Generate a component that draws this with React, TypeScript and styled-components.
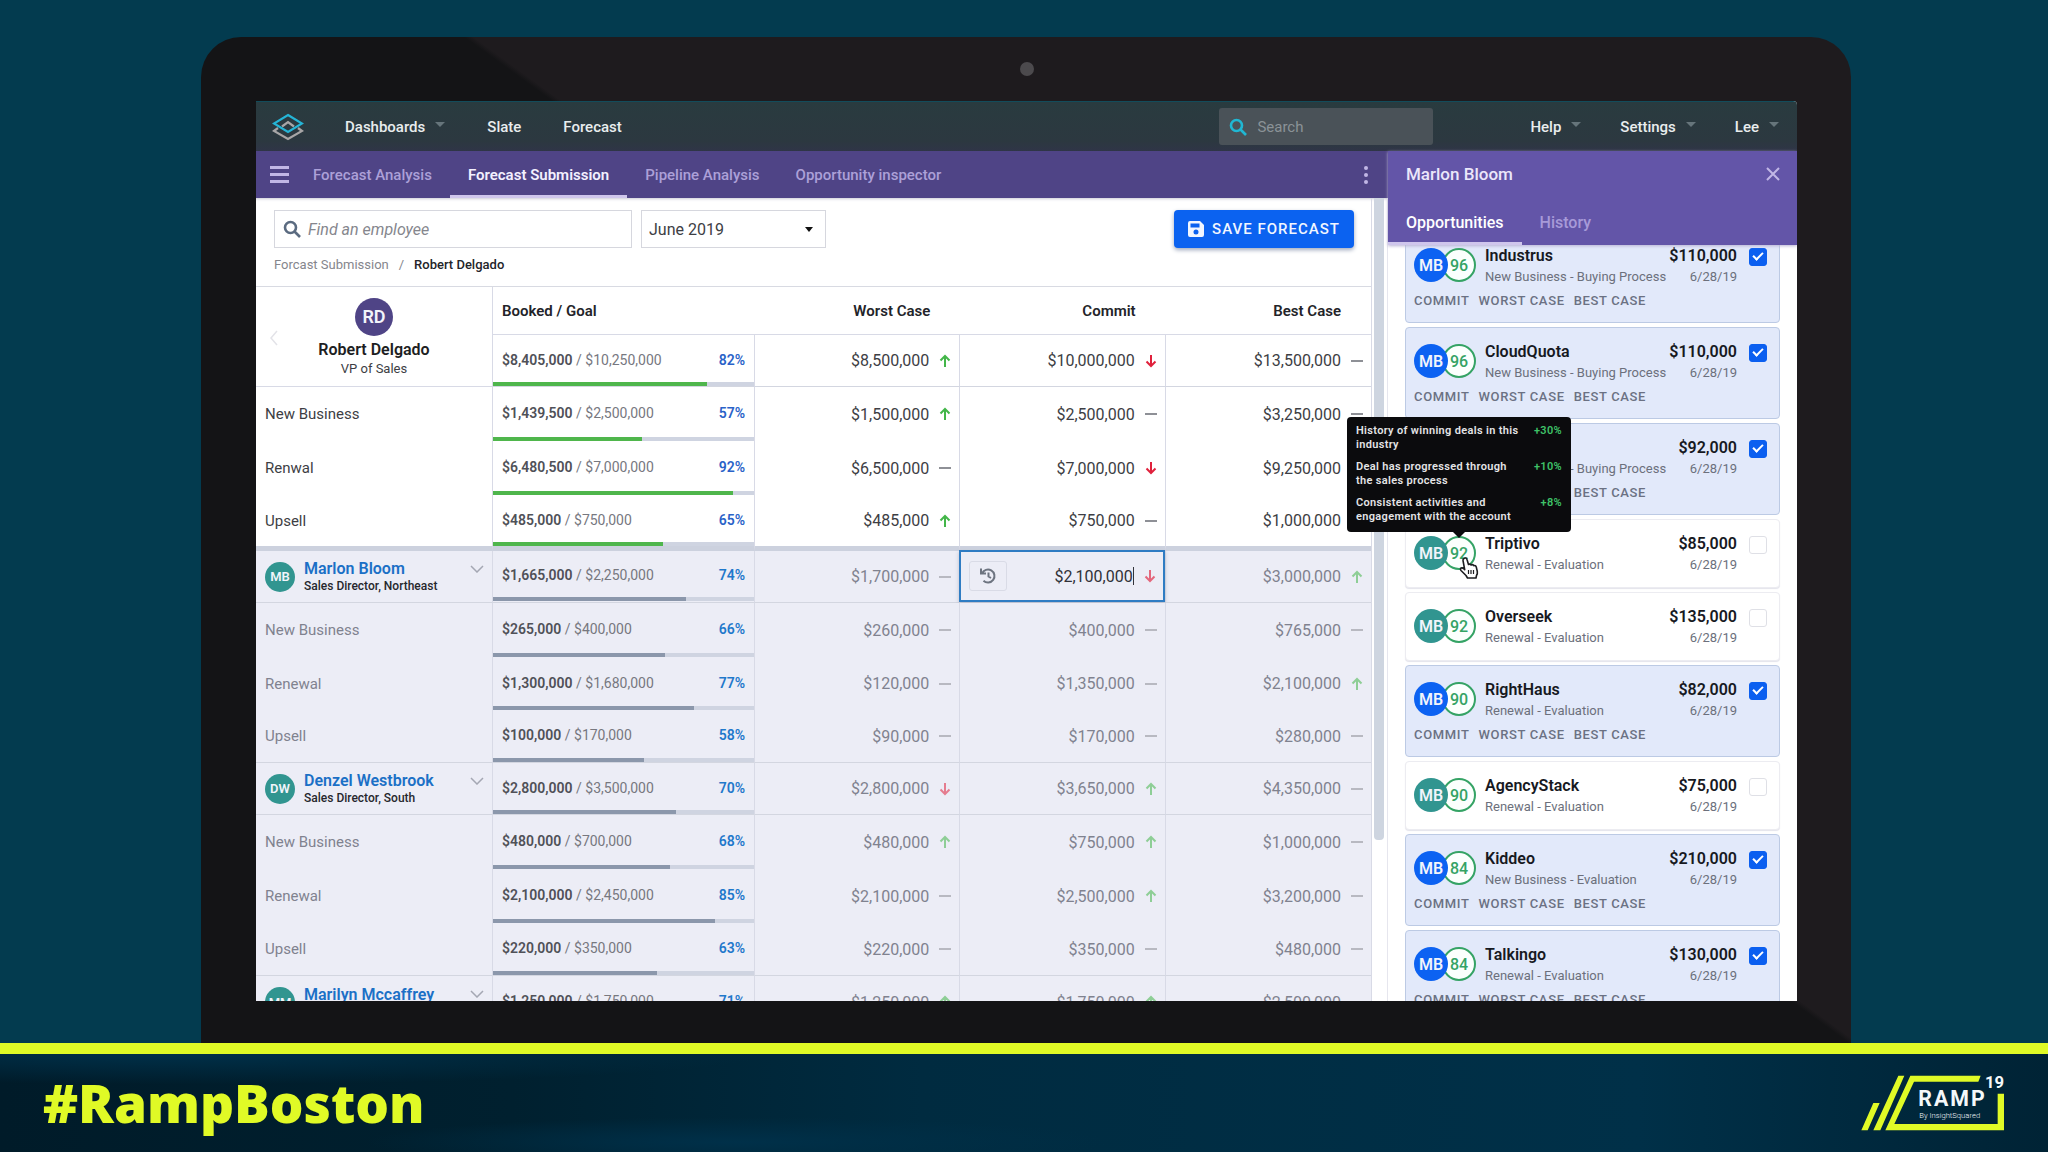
import React from "react";
import styled, { createGlobalStyle, css } from "styled-components";

type Trend = "up" | "down" | "flat";
type Amount = [string, Trend];

const GlobalStyle = createGlobalStyle`
  *, *::before, *::after { box-sizing: border-box; }
  html, body { margin: 0; height: 100%; }
  body { background: #033b4f; font-family: Roboto, "Noto Sans", sans-serif; font-size: 16px; color: #3d3e44; }
  button, input, select { font: inherit; color: inherit; margin: 0; }
  a { color: inherit; text-decoration: none; }
`;

const Page = styled.div`
  display: flex;
  flex-direction: column;
  height: 100vh;
  overflow: hidden;
`;

const Stage = styled.main`
  display: flex;
  flex: 1;
  min-height: 0;
  padding: 37px 197px 0 201px;
`;

const Monitor = styled.div`
  display: flex;
  flex-direction: column;
  align-items: stretch;
  flex: 1;
  min-width: 0;
  padding: 0 54px 42px 55px;
  border-radius: 40px 40px 0 0;
  background: linear-gradient(36deg, #141416 54.3%, #1e1b1e 54.6%);
`;

const CameraBar = styled.div`
  display: flex;
  justify-content: center;
  align-items: center;
  height: 64px;
`;

const Camera = styled.span`
  width: 14px;
  height: 14px;
  border-radius: 50%;
  background: #4c4a4d;
`;

const Screen = styled.div`
  display: flex;
  flex-direction: column;
  flex: 1;
  min-height: 0;
  overflow: hidden;
  background: #fff;
  border-radius: 0 4px 0 0;
`;

const TopNav = styled.header`
  display: flex;
  align-items: center;
  flex: none;
  height: 50px;
  padding: 0 18px 0 16px;
  border-top: 1px solid #124c5b;
  background: linear-gradient(#293b3f, #2c3840 80%, #2f3547);
  font-size: 15px;
  font-weight: 500;
  color: #e9edee;
`;

const NavLinks = styled.nav<{ $end?: boolean }>`
  display: flex;
  gap: ${(p) => (p.$end ? 39 : 42)}px;
  margin-left: ${(p) => (p.$end ? 97 : 41)}px;
`;

const NavLink = styled.a<{ $caret?: boolean }>`
  display: flex;
  align-items: center;
  gap: 10px;
  ${(p) =>
    p.$caret &&
    css`
      &::after {
        content: "";
        margin-bottom: 5px;
        border: 5px solid transparent;
        border-top-color: #66757b;
        border-bottom: 0;
      }
    `}
`;

const NavSearch = styled.label`
  display: flex;
  align-items: center;
  gap: 10px;
  width: 214px;
  height: 37px;
  margin-left: auto;
  padding: 0 10px;
  border-radius: 3px;
  background: #4a5258;
  color: #20b7d3;

  input {
    flex: 1;
    min-width: 0;
    border: 0;
    padding: 0;
    background: none;
    outline: none;
  }
  input::placeholder { color: #8b9297; font-weight: 400; }
`;

const Workspace = styled.div`
  display: flex;
  flex: 1;
  min-height: 0;
`;

const MainPane = styled.section`
  display: flex;
  flex-direction: column;
  flex: 1;
  min-width: 0;
`;

const TabBar = styled.nav`
  display: flex;
  align-items: stretch;
  flex: none;
  height: 47px;
  padding: 0 10px 0 8px;
  background: #4f4486;
`;

const IconButton = styled.button`
  display: flex;
  align-items: center;
  justify-content: center;
  padding: 0;
  border: 0;
  background: none;
  color: #c1b7e6;
`;

const BarButton = styled(IconButton)`
  width: 31px;
`;

const KebabButton = styled(IconButton)`
  width: 24px;
  margin-left: auto;
`;

const Tab = styled.a<{ $active?: boolean }>`
  display: flex;
  align-items: center;
  padding: 0 18px;
  font-size: 15px;
  font-weight: ${(p) => (p.$active ? 600 : 500)};
  color: ${(p) => (p.$active ? "#f3f0ff" : "#aca0d8")};
  box-shadow: ${(p) => (p.$active ? "inset 0 -3px #cfc6ec" : "none")};
`;

const Scroller = styled.div`
  display: flex;
  flex: 1;
  min-height: 0;
  box-shadow: inset 0 3px 3px -2px #cbcbd6;
`;

const Sheet = styled.div`
  flex: 1;
  min-width: 0;
  overflow: hidden;
  border-right: 1px solid #d8dae6;
`;

const ScrollTrack = styled.div`
  width: 16px;
  padding: 0 3px 0 2px;
  border-right: 1px solid #e6e6ee;
`;

const ScrollThumb = styled.div`
  height: 80%;
  border-radius: 0 0 4px 4px;
  background: #ced5e0;
`;

const Toolbar = styled.div`
  display: flex;
  gap: 9px;
  padding: 12px 17px 0 18px;
`;

const EmployeeSearch = styled.label`
  display: flex;
  align-items: center;
  gap: 7px;
  width: 358px;
  height: 38px;
  padding: 0 8px;
  border: 1px solid #d6d7de;
  color: #5b6b80;

  input {
    flex: 1;
    min-width: 0;
    border: 0;
    padding: 0;
    outline: none;
  }
  input::placeholder { color: #85868d; font-style: italic; }
`;

const MonthField = styled.div`
  display: grid;
  align-items: center;
  width: 185px;
  height: 38px;
  border: 1px solid #d6d7de;

  > * { grid-area: 1 / 1; }

  select {
    appearance: none;
    width: 100%;
    height: 100%;
    padding: 0 7px;
    border: 0;
    background: none;
  }

  &::after {
    content: "";
    grid-area: 1 / 1;
    justify-self: end;
    margin-right: 12px;
    border: 4px solid transparent;
    border-top: 5px solid #111;
    border-bottom: 0;
    pointer-events: none;
  }
`;

const SaveButton = styled.button`
  display: flex;
  align-items: center;
  justify-content: center;
  gap: 8px;
  width: 180px;
  height: 38px;
  margin-left: auto;
  padding: 0;
  border: 0;
  border-radius: 4px;
  background: #0b62f0;
  box-shadow: 0 2px 4px #9fa8bd;
  font-size: 15px;
  font-weight: 500;
  letter-spacing: 1px;
  color: #f1f6ff;
`;

const Breadcrumb = styled.nav`
  display: flex;
  gap: 10px;
  padding: 8px 18px 12px;
  font-size: 13px;
  line-height: 18px;
  color: #85868d;

  b { font-weight: 500; color: #232429; }
`;

const Grid = styled.table`
  width: 100%;
  table-layout: fixed;
  border-collapse: separate;
  border-spacing: 0;
  border-top: 1px solid #d8dae2;

  th, td { padding: 0; text-align: left; font-weight: 400; }
`;

const GroupHead = styled.th`
  border-right: 1px solid #d8dae6;
  border-bottom: 1px solid #d8dae6;
`;

const HeadPerson = styled.div`
  display: grid;
  grid-template-columns: 34px 1fr 34px;
  justify-items: center;
  align-items: center;
  height: 99px;
  padding-top: 2px;
`;

const HeadPersonText = styled.div`
  display: flex;
  flex-direction: column;
  align-items: center;
  font-size: 13px;
  line-height: 18px;
  color: #3d3e44;

  strong { margin-top: 4px; font-size: 16px; line-height: 20px; font-weight: 600; color: #1d1e22; }
`;

const Disc = styled.span<{ $size: number; $color: string; $font?: number }>`
  display: flex;
  align-items: center;
  justify-content: center;
  flex: none;
  width: ${(p) => p.$size}px;
  height: ${(p) => p.$size}px;
  border-radius: 50%;
  background: ${(p) => p.$color};
  font-size: ${(p) => p.$font ?? 16}px;
  font-weight: 600;
  color: #f2f4fb;
`;

const ColumnHead = styled.th<{ $start?: boolean }>`
  && {
    height: 48px;
    padding: ${(p) => (p.$start ? "0 0 0 9px" : "0 30px 0 0")};
    border-bottom: 1px solid #d8dae6;
    text-align: ${(p) => (p.$start ? "left" : "right")};
    font-size: 15px;
    font-weight: 600;
    color: #232429;
  }
`;

const Row = styled.tr<{ $height: number; $muted?: boolean; $line?: boolean; $thick?: boolean }>`
  height: ${(p) => p.$height}px;
  background: ${(p) => (p.$muted ? "#ecedf6" : "#fff")};
  color: ${(p) => (p.$muted ? "#80828f" : "#3d3e44")};

  > * {
    height: ${(p) => p.$height}px;
    border-right: 1px solid #d8dae6;
    border-bottom: ${(p) => (p.$thick ? "5px solid #ccd1de" : p.$line ? "1px solid #d3d6e0" : "0")};
  }
  > *:last-child { border-right: 0; }
`;

const RowLabel = styled.th`
  && { padding-left: 9px; font-size: 15px; }
`;

const Person = styled.div`
  display: flex;
  gap: 9px;
  padding: 0 8px 0 0;
  align-items: center;
`;

const PersonText = styled.div`
  display: flex;
  flex-direction: column;
  flex: 1;
  min-width: 0;
  font-size: 12px;
  line-height: 16px;
  font-weight: 500;
  color: #26272d;

  a { font-size: 16px; line-height: 19px; font-weight: 600; color: #1b70c6; }
`;

const BookedCell = styled.td`
  vertical-align: top;
`;

const Booked = styled.div<{ $height: number }>`
  display: flex;
  flex-direction: column;
  height: ${(p) => p.$height}px;
`;

const BookedText = styled.div<{ $muted?: boolean }>`
  display: flex;
  align-items: center;
  justify-content: space-between;
  flex: 1;
  padding: 2px 9px 0;
  font-size: 14px;
  color: #77787f;

  b { font-weight: 600; color: #505158; }
  em { font-style: normal; font-weight: 600; color: ${(p) => (p.$muted ? "#1f78cb" : "#2a62c8")}; }
`;

const Meter = styled.div<{ $muted?: boolean }>`
  height: 4px;
  background: #cfd4e1;

  > div { height: 100%; background: ${(p) => (p.$muted ? "#8b97ab" : "#4fb64c")}; }
`;

const AmountCell = styled.td`
  && { padding: 0 6px 0 0; }
`;

const AmountLine = styled.div<{ $muted?: boolean }>`
  display: flex;
  align-items: center;
  justify-content: flex-end;
  gap: 8px;

  svg { opacity: ${(p) => (p.$muted ? 0.55 : 1)}; }
`;

const Editor = styled.div`
  display: flex;
  align-items: center;
  gap: 8px;
  height: 52px;
  margin: -1px 0 0 -1px;
  padding: 0 5px 0 8px;
  border: 2px solid #2f7cc3;
  box-shadow: 0 2px 4px #b9bdcc;

  > svg { opacity: 0.65; }
`;

const EditingCell = styled.td`
  vertical-align: top;
`;

const HistoryButton = styled(IconButton)`
  width: 38px;
  height: 30px;
  border: 1px solid #d9dbe6;
  border-radius: 3px;
  color: #6d7480;
`;

const AmountInput = styled.input`
  flex: 1;
  min-width: 0;
  padding: 0 1px 0 0;
  border: 0;
  background: linear-gradient(#33343a, #33343a) right / 1px 18px no-repeat;
  outline: none;
  text-align: right;
  color: #303138;
`;

const Panel = styled.aside`
  display: flex;
  flex-direction: column;
  flex: none;
  width: 409px;
  z-index: 1;
`;

const PanelHeader = styled.header`
  flex: none;
  height: 94px;
  background: #6355a8;
  z-index: 1;
  box-shadow: 0 1px 3px #b9b3d4;
`;

const PanelTitle = styled.div`
  display: flex;
  justify-content: space-between;
  align-items: center;
  height: 46px;
  padding: 0 17px 0 18px;

  h2 { margin: 0; font-size: 17px; font-weight: 500; color: #ebe7fa; }
`;

const PanelTabs = styled.nav`
  display: flex;
  height: 48px;
`;

const PanelTab = styled(Tab)`
  padding: 2px 18px 0;
  font-size: 16px;
  font-weight: 500;
  color: ${(p) => (p.$active ? "#fff" : "#a79ad8")};
`;

const CardList = styled.ul`
  display: flex;
  flex-direction: column;
  gap: 4px;
  margin: -14px 0 0;
  padding: 0 17px;
  list-style: none;
`;

const Card = styled.li<{ $on: boolean }>`
  flex: none;
  height: ${(p) => (p.$on ? 92 : 69)}px;
  padding: 14px 12px 0 8px;
  border: 1px solid ${(p) => (p.$on ? "#bccae4" : "#ececf1")};
  border-radius: 4px;
  background: ${(p) => (p.$on ? "#e2e9fa" : "#fff")};
  box-shadow: ${(p) => (p.$on ? "none" : "0 1px 1px #e4e4ec")};
`;

const CardTop = styled.div`
  display: flex;
  align-items: flex-start;
`;

const Score = styled.span<{ $raised?: boolean }>`
  position: relative;
  z-index: ${(p) => (p.$raised ? "auto" : 0)};
  display: flex;
  align-items: center;
  justify-content: center;
  flex: none;
  width: 34px;
  height: 34px;
  margin: 2px 9px 0 -6px;
  border: 2px solid #35a365;
  border-radius: 50%;
  background: #fbfffd;
  font-weight: 500;
  color: #35a365;
`;

const OwnerDisc = styled(Disc)`
  position: relative;
  z-index: 1;
  margin-top: 2px;
`;

const Column = styled.div<{ $end?: boolean }>`
  display: flex;
  flex-direction: column;
  flex: ${(p) => (p.$end ? "none" : 1)};
  min-width: 0;
  align-items: ${(p) => (p.$end ? "flex-end" : "flex-start")};
  font-size: 13px;
  line-height: 23px;
  white-space: nowrap;
  color: #6c707c;

  strong { font-size: 16px; line-height: 19px; font-weight: 600; color: #17191f; }
`;

const Check = styled.input`
  appearance: none;
  flex: none;
  width: 18px;
  height: 18px;
  margin: 2px 0 0 12px;
  border: 1px solid #dfe0e6;
  border-radius: 3px;
  background: #fff;

  &:checked {
    border-color: #0b5ff0;
    background: #0b5ff0;
  }
  &:checked::after {
    content: "";
    display: block;
    width: 6px;
    height: 10px;
    margin: 1px 0 0 5px;
    border: solid #fff;
    border-width: 0 2px 2px 0;
    transform: rotate(45deg);
  }
`;

const Tags = styled.div`
  display: flex;
  gap: 9px;
  margin-top: 4px;
  font-size: 13px;
  line-height: 18px;
  font-weight: 500;
  letter-spacing: 0.05em;
  color: #6b7183;
`;

const Tooltip = styled.div`
  position: absolute;
  z-index: 3;
  bottom: 36px;
  left: 50%;
  width: 224px;
  margin-left: -112px;
  padding: 7px 9px 8px;
  border-radius: 4px;
  background: #0b0b0d;
  font-size: 11px;
  line-height: 14px;
  font-weight: 600;
  letter-spacing: 0.03em;
  color: #e4e4e6;

  &::after {
    content: "";
    position: absolute;
    top: 100%;
    left: 50%;
    margin-left: -6px;
    border: 6px solid transparent;
    border-top-color: #0b0b0d;
    border-bottom: 0;
  }
`;

const Factor = styled.div`
  display: flex;
  justify-content: space-between;
  & + & { margin-top: 8px; }

  p { width: 170px; margin: 0; }
  b { font-weight: 600; color: #3fc268; }
`;

const Pointer = styled.svg`
  position: absolute;
  z-index: 4;
  left: 14px;
  top: 18px;
`;

const Footer = styled.footer`
  display: flex;
  justify-content: space-between;
  align-items: center;
  flex: none;
  height: 109px;
  padding: 0 43px;
  border-top: 11px solid #e0fa26;
  background:
    radial-gradient(ellipse at 9% 0%, #003049, transparent 22%),
    radial-gradient(ellipse at 36% 90%, #003049, transparent 20%),
    linear-gradient(90deg, #001b29, #00202f 25%, #002b40 45%, #003048 80%, #002335);
`;

const Hashtag = styled.strong`
  font-family: "Noto Sans", sans-serif;
  font-size: 53px;
  line-height: 60px;
  font-weight: 900;
  color: #e0fa26;
`;

const trendPath: Record<Trend, { d: string; color: string }> = {
  up: { d: "M7 13V2M2.500 6.500L7 2l4.500 4.500", color: "#43b649" },
  down: { d: "M7 1v11M2.500 7.500L7 12l4.500-4.500", color: "#e0213c" },
  flat: { d: "M1 7h12", color: "#8e9096" },
};

const TrendMark = ({ kind }: { kind: Trend }) => (
  <svg width="16" height="14" viewBox="-1 0 16 14" fill="none" stroke={trendPath[kind].color} strokeWidth="2">
    <path d={trendPath[kind].d} />
  </svg>
);

const Magnifier = () => (
  <svg width="18" height="18" viewBox="0 0 18 18" fill="none" stroke="currentColor" strokeWidth="2.600">
    <circle cx="7.500" cy="7.500" r="5.500" />
    <path d="M11.500 11.500L17 17" />
  </svg>
);

const Chevron = () => (
  <svg width="14" height="8" viewBox="0 0 14 8" fill="none" stroke="#a4a7b3" strokeWidth="1.500">
    <path d="M1 1l6 6 6-6" />
  </svg>
);

const ChevronSlot = styled.span`
  display: flex;
  margin-bottom: 16px;
`;

const LayersLogo = () => (
  <svg width="32" height="28" viewBox="0 0 32 28" fill="none" strokeWidth="2.200">
    <path d="M6 15L2 18l14 8 14-8-4-3" stroke="#a7a5a6" />
    <path d="M10 13.500l6-4.500 6 4.500" stroke="#a7a5a6" />
    <path d="M16 2l14 8.500L16 19 2 10.500z" stroke="#25b4d6" />
  </svg>
);

type Line = {
  label: string;
  booked: string;
  goal: string;
  pct: number;
  amounts: [Amount, Amount, Amount];
  person?: { initials: string; role: string };
  editing?: boolean;
  height: number;
  line?: boolean;
  thick?: boolean;
};

const team: Line[] = [
  { label: "New Business", booked: "$1,439,500", goal: "$2,500,000", pct: 57, height: 54, amounts: [["$1,500,000", "up"], ["$2,500,000", "flat"], ["$3,250,000", "flat"]] },
  { label: "Renwal", booked: "$6,480,500", goal: "$7,000,000", pct: 92, height: 54, amounts: [["$6,500,000", "flat"], ["$7,000,000", "down"], ["$9,250,000", "up"]] },
  { label: "Upsell", booked: "$485,000", goal: "$750,000", pct: 65, height: 56, thick: true, amounts: [["$485,000", "up"], ["$750,000", "flat"], ["$1,000,000", "flat"]] },
];

const reports: Line[] = [
  { label: "Marlon Bloom", person: { initials: "MB", role: "Sales Director, Northeast" }, editing: true, line: true, booked: "$1,665,000", goal: "$2,250,000", pct: 74, height: 51, amounts: [["$1,700,000", "flat"], ["$2,100,000", "down"], ["$3,000,000", "up"]] },
  { label: "New Business", booked: "$265,000", goal: "$400,000", pct: 66, height: 54, amounts: [["$260,000", "flat"], ["$400,000", "flat"], ["$765,000", "flat"]] },
  { label: "Renewal", booked: "$1,300,000", goal: "$1,680,000", pct: 77, height: 53, amounts: [["$120,000", "flat"], ["$1,350,000", "flat"], ["$2,100,000", "up"]] },
  { label: "Upsell", booked: "$100,000", goal: "$170,000", pct: 58, height: 53, line: true, amounts: [["$90,000", "flat"], ["$170,000", "flat"], ["$280,000", "flat"]] },
  { label: "Denzel Westbrook", person: { initials: "DW", role: "Sales Director, South" }, line: true, booked: "$2,800,000", goal: "$3,500,000", pct: 70, height: 52, amounts: [["$2,800,000", "down"], ["$3,650,000", "up"], ["$4,350,000", "flat"]] },
  { label: "New Business", booked: "$480,000", goal: "$700,000", pct: 68, height: 54, amounts: [["$480,000", "up"], ["$750,000", "up"], ["$1,000,000", "flat"]] },
  { label: "Renewal", booked: "$2,100,000", goal: "$2,450,000", pct: 85, height: 54, amounts: [["$2,100,000", "flat"], ["$2,500,000", "up"], ["$3,200,000", "flat"]] },
  { label: "Upsell", booked: "$220,000", goal: "$350,000", pct: 63, height: 53, line: true, amounts: [["$220,000", "flat"], ["$350,000", "flat"], ["$480,000", "flat"]] },
  { label: "Marilyn Mccaffrey", person: { initials: "MM", role: "Sales Director, West" }, line: true, booked: "$1,250,000", goal: "$1,750,000", pct: 71, height: 53, amounts: [["$1,250,000", "up"], ["$1,750,000", "up"], ["$2,500,000", "flat"]] },
];

const BookedBlock = ({ row, muted }: { row: Pick<Line, "booked" | "goal" | "pct" | "height" | "line" | "thick">; muted?: boolean }) => (
  <BookedCell>
    <Booked $height={row.height - (row.thick ? 5 : row.line ? 1 : 0)}>
      <BookedText $muted={muted}>
        <span>
          <b>{row.booked}</b> / {row.goal}
        </span>
        <em>{row.pct}%</em>
      </BookedText>
      <Meter $muted={muted}>
        <div style={{ width: `${row.pct}%` }} />
      </Meter>
    </Booked>
  </BookedCell>
);

const Amounts = ({ row, muted }: { row: Pick<Line, "amounts" | "editing">; muted?: boolean }) => (
  <>
    {row.amounts.map(([value, kind], i) =>
      row.editing && i === 1 ? (
        <EditingCell key={i}>
          <Editor>
            <HistoryButton aria-label="Commit history">
              <svg width="18" height="18" viewBox="0 0 18 18" fill="none" stroke="currentColor" strokeWidth="2">
                <path d="M3 6.500A6.500 6.500 0 1 1 4.500 13.800M2 1.500v5h5M9.500 5.500v4l2.500 1.500" />
              </svg>
            </HistoryButton>
            <AmountInput aria-label="Commit amount" defaultValue={value} />
            <TrendMark kind={kind} />
          </Editor>
        </EditingCell>
      ) : (
        <AmountCell key={i}>
          <AmountLine $muted={muted}>
            {value}
            <TrendMark kind={kind} />
          </AmountLine>
        </AmountCell>
      )
    )}
  </>
);

const LineRow = ({ row, muted }: { row: Line; muted?: boolean }) => (
  <Row $height={row.height} $muted={muted} $line={row.line} $thick={row.thick}>
    <RowLabel scope="row">
      {row.person ? (
        <Person>
          <Disc $size={30} $color="#319590" $font={13}>
            {row.person.initials}
          </Disc>
          <PersonText>
            <a href="#person">{row.label}</a>
            <span>{row.person.role}</span>
          </PersonText>
          <ChevronSlot>
            <Chevron />
          </ChevronSlot>
        </Person>
      ) : (
        row.label
      )}
    </RowLabel>
    <BookedBlock row={row} muted={muted} />
    <Amounts row={row} muted={muted} />
  </Row>
);

type Deal = { name: string; score: number; kind: string; amount: string; on: boolean; hovered?: boolean };

const deals: Deal[] = [
  { name: "Industrus", score: 96, kind: "New Business - Buying Process", amount: "$110,000", on: true },
  { name: "CloudQuota", score: 96, kind: "New Business - Buying Process", amount: "$110,000", on: true },
  { name: "Skyline", score: 94, kind: "New Business - Buying Process", amount: "$92,000", on: true },
  { name: "Triptivo", score: 92, kind: "Renewal - Evaluation", amount: "$85,000", on: false, hovered: true },
  { name: "Overseek", score: 92, kind: "Renewal - Evaluation", amount: "$135,000", on: false },
  { name: "RightHaus", score: 90, kind: "Renewal - Evaluation", amount: "$82,000", on: true },
  { name: "AgencyStack", score: 90, kind: "Renewal - Evaluation", amount: "$75,000", on: false },
  { name: "Kiddeo", score: 84, kind: "New Business - Evaluation", amount: "$210,000", on: true },
  { name: "Talkingo", score: 84, kind: "Renewal - Evaluation", amount: "$130,000", on: true },
];

const ScoreTooltip = () => (
  <Tooltip role="tooltip">
    <Factor>
      <p>History of winning deals in this industry</p>
      <b>+30%</b>
    </Factor>
    <Factor>
      <p>Deal has progressed through the sales process</p>
      <b>+10%</b>
    </Factor>
    <Factor>
      <p>Consistent activities and engagement with the account</p>
      <b>+8%</b>
    </Factor>
  </Tooltip>
);

const HandPointer = () => (
  <Pointer width="22" height="24" viewBox="0 0 22 24" fill="#fff" stroke="#1d1d20" strokeWidth="1.600" strokeLinejoin="round">
    <path d="M6 2.500c1-1 2.600-.5 3 1l1.500 5c1-.7 2-.4 2.600.5 1-.6 2-.3 2.600.7 1.200-.5 2.300 0 2.600 1.400l1 4.400c.3 1.500 0 2.700-.8 4l-.5 2.500H9.500L8 19.500l-5-5c-.8-1-.6-2 .2-2.500.9-.4 1.800 0 2.500.7l1 1L5 4.500c-.2-.8.2-1.500 1-2z" />
    <path d="M10.500 14v4M13 14v4M15.500 14v4" strokeWidth="1.200" />
  </Pointer>
);

const DealCard = ({ deal }: { deal: Deal }) => (
  <Card $on={deal.on}>
    <CardTop>
      <OwnerDisc $size={34} $color={deal.on ? "#0c62f2" : "#319590"}>
        MB
      </OwnerDisc>
      <Score $raised={deal.hovered}>
        {deal.score}
        {deal.hovered && <ScoreTooltip />}
        {deal.hovered && <HandPointer />}
      </Score>
      <Column>
        <strong>{deal.name}</strong>
        <span>{deal.kind}</span>
      </Column>
      <Column $end>
        <strong>{deal.amount}</strong>
        <span>6/28/19</span>
      </Column>
      <Check type="checkbox" defaultChecked={deal.on} aria-label={`Include ${deal.name}`} />
    </CardTop>
    {deal.on && (
      <Tags>
        <span>COMMIT</span>
        <span>WORST CASE</span>
        <span>BEST CASE</span>
      </Tags>
    )}
  </Card>
);

const RampLogo = () => (
  <svg width="144" height="56" viewBox="485 169 430 168" role="img" aria-label="Ramp 19 by InsightSquared">
    <path
      fill="#e0fa26"
      d="M485 335h19l36-82h-19zM521 335h21l72-164h-18zM557 335L632 171h211l-7 18H643L584 316h310v-91h19v110z"
    />
    <g fill="#f4f8fa" fontFamily="Roboto, sans-serif">
      <text x="656" y="262" fontSize="64" fontWeight="700" letterSpacing="6">
        RAMP
      </text>
      <text x="659" y="297" fontSize="23" fontWeight="300">
        By InsightSquared
      </text>
      <text x="856" y="208" fontSize="50" fontWeight="700">
        19
      </text>
    </g>
  </svg>
);

export default function App() {
  return (
    <Page>
      <GlobalStyle />
      <Stage>
        <Monitor>
          <CameraBar>
            <Camera />
          </CameraBar>
          <Screen>
            <TopNav>
              <LayersLogo />
              <NavLinks>
                <NavLink href="#dashboards" $caret>Dashboards</NavLink>
                <NavLink href="#slate">Slate</NavLink>
                <NavLink href="#forecast">Forecast</NavLink>
              </NavLinks>
              <NavSearch>
                <Magnifier />
                <input placeholder="Search" aria-label="Search" />
              </NavSearch>
              <NavLinks $end>
                <NavLink href="#help" $caret>Help</NavLink>
                <NavLink href="#settings" $caret>Settings</NavLink>
                <NavLink href="#account" $caret>Lee</NavLink>
              </NavLinks>
            </TopNav>
            <Workspace>
              <MainPane>
                <TabBar>
                  <BarButton aria-label="Menu">
                    <svg width="19" height="18" viewBox="0 0 19 18" fill="currentColor">
                      <path d="M0 0h19v3H0zM0 7h19v3H0zM0 14h19v3H0z" />
                    </svg>
                  </BarButton>
                  <Tab href="#analysis">Forecast Analysis</Tab>
                  <Tab href="#submission" $active>Forecast Submission</Tab>
                  <Tab href="#pipeline">Pipeline Analysis</Tab>
                  <Tab href="#inspector">Opportunity inspector</Tab>
                  <KebabButton aria-label="More">
                    <svg width="4" height="18" viewBox="0 0 4 18" fill="currentColor">
                      <circle cx="2" cy="2" r="2" />
                      <circle cx="2" cy="9" r="2" />
                      <circle cx="2" cy="16" r="2" />
                    </svg>
                  </KebabButton>
                </TabBar>
                <Scroller>
                  <Sheet>
                    <Toolbar>
                      <EmployeeSearch>
                        <Magnifier />
                        <input placeholder="Find an employee" aria-label="Find an employee" />
                      </EmployeeSearch>
                      <MonthField>
                        <select aria-label="Month" defaultValue="June 2019">
                          <option>June 2019</option>
                        </select>
                      </MonthField>
                      <SaveButton>
                        <svg width="16" height="16" viewBox="0 0 16 16" fill="currentColor" fillRule="evenodd">
                          <path d="M2 0h10l4 4v10a2 2 0 0 1-2 2H2a2 2 0 0 1-2-2V2a2 2 0 0 1 2-2zm.500 2.500v4h9v-4zM8 8.500a2.500 2.500 0 1 0 0 5 2.500 2.500 0 0 0 0-5z" />
                        </svg>
                        SAVE FORECAST
                      </SaveButton>
                    </Toolbar>
                    <Breadcrumb>
                      <a href="#submission">Forcast Submission</a>
                      <span>/</span>
                      <b>Robert Delgado</b>
                    </Breadcrumb>
                    <Grid>
                      <colgroup>
                        <col width="237" />
                        <col width="262" />
                        <col />
                        <col />
                        <col />
                      </colgroup>
                      <thead>
                        <tr>
                          <GroupHead rowSpan={2}>
                            <HeadPerson>
                              <svg width="9" height="16" viewBox="0 0 9 16" fill="none" stroke="#e3e3e8" strokeWidth="1.500">
                                <path d="M8 1L2 8l6 7" />
                              </svg>
                              <HeadPersonText>
                                <Disc $size={38} $color="#4f4486" $font={18}>
                                  RD
                                </Disc>
                                <strong>Robert Delgado</strong>
                                <span>VP of Sales</span>
                              </HeadPersonText>
                            </HeadPerson>
                          </GroupHead>
                          <ColumnHead $start>Booked / Goal</ColumnHead>
                          <ColumnHead>Worst Case</ColumnHead>
                          <ColumnHead>Commit</ColumnHead>
                          <ColumnHead>Best Case</ColumnHead>
                        </tr>
                        <Row $height={52} $line>
                          <BookedBlock row={{ booked: "$8,405,000", goal: "$10,250,000", pct: 82, height: 52, line: true }} />
                          <Amounts row={{ amounts: [["$8,500,000", "up"], ["$10,000,000", "down"], ["$13,500,000", "flat"]] }} />
                        </Row>
                      </thead>
                      <tbody>
                        {team.map((row) => (
                          <LineRow key={row.label} row={row} />
                        ))}
                        {reports.map((row, i) => (
                          <LineRow key={i} row={row} muted />
                        ))}
                      </tbody>
                    </Grid>
                  </Sheet>
                  <ScrollTrack>
                    <ScrollThumb />
                  </ScrollTrack>
                </Scroller>
              </MainPane>
              <Panel>
                <PanelHeader>
                  <PanelTitle>
                    <h2>Marlon Bloom</h2>
                    <IconButton aria-label="Close">
                      <svg width="14" height="14" viewBox="0 0 14 14" fill="none" stroke="currentColor" strokeWidth="2">
                        <path d="M1 1l12 12M13 1L1 13" />
                      </svg>
                    </IconButton>
                  </PanelTitle>
                  <PanelTabs>
                    <PanelTab href="#opportunities" $active>Opportunities</PanelTab>
                    <PanelTab href="#history">History</PanelTab>
                  </PanelTabs>
                </PanelHeader>
                <CardList>
                  {deals.map((deal) => (
                    <DealCard key={deal.name} deal={deal} />
                  ))}
                </CardList>
              </Panel>
            </Workspace>
          </Screen>
        </Monitor>
      </Stage>
      <Footer>
        <Hashtag>#RampBoston</Hashtag>
        <RampLogo />
      </Footer>
    </Page>
  );
}
